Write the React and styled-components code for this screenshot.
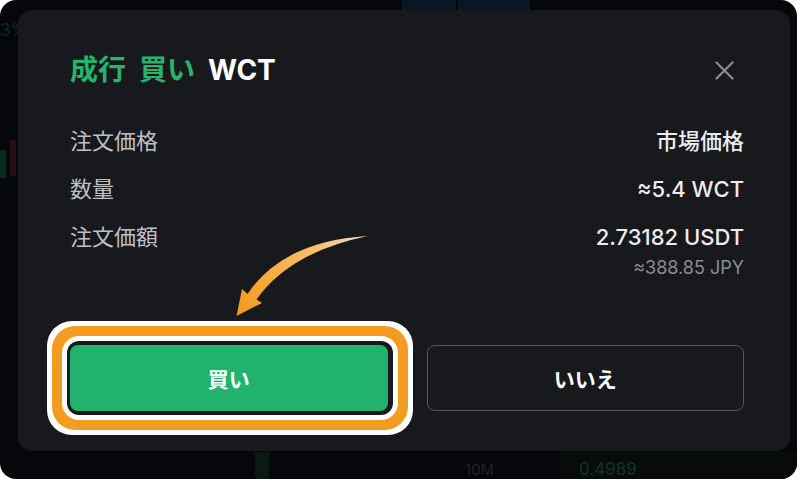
import React from "react";
import styled, { createGlobalStyle } from "styled-components";

const GlobalStyle = createGlobalStyle`
  html, body {
    margin: 0;
    padding: 0;
    background: #ffffff;
  }
  body {
    width: 800px;
    height: 482px;
    overflow: hidden;
    font-family: Inter, "Noto Sans CJK JP", sans-serif;
  }
`;

const Frame = styled.div`
  position: relative;
  width: 797px;
  height: 479px;
  box-sizing: border-box;
  padding: 10px 7px 0 18px;
  background: #06070a;
  border-radius: 16px;
  overflow: hidden;
`;

const Backdrop = styled.div`
  position: absolute;
  inset: 0;
  z-index: 0;
`;

const Faint = styled.span`
  position: absolute;
  left: ${(p) => p.$x}px;
  top: ${(p) => p.$y}px;
  font-size: ${(p) => p.$size || 16}px;
  color: ${(p) => p.$color};
  line-height: 1;
  white-space: nowrap;
`;

const FaintBlock = styled.div`
  position: absolute;
  left: ${(p) => p.$x}px;
  top: ${(p) => p.$y}px;
  width: ${(p) => p.$w}px;
  height: ${(p) => p.$h}px;
  background: ${(p) => p.$color};
`;

const Modal = styled.div`
  position: relative;
  z-index: 1;
  width: 772px;
  box-sizing: border-box;
  padding: 42px 46px 40px 52px;
  background: #18191d;
  border-radius: 14px;
`;

const Header = styled.div`
  display: flex;
  align-items: center;
  justify-content: space-between;
  height: 36px;
`;

const Title = styled.h2`
  margin: 0;
  font-size: 28px;
  line-height: 36px;
  font-weight: 700;
  color: #ffffff;
  display: flex;
  gap: 13px;
`;

const Green = styled.span`
  color: #26b46c;
`;

const CloseButton = styled.button`
  width: 40px;
  height: 40px;
  padding: 0;
  border: none;
  background: transparent;
  display: flex;
  align-items: center;
  justify-content: center;
  cursor: pointer;
`;

const InfoList = styled.div`
  display: flex;
  flex-direction: column;
  gap: 18px;
  margin-top: 38px;
`;

const Row = styled.div`
  display: flex;
  justify-content: space-between;
  align-items: flex-start;
`;

const Label = styled.span`
  font-size: 22px;
  line-height: 30px;
  color: #bfc0c4;
`;

const ValueCol = styled.div`
  display: flex;
  flex-direction: column;
  align-items: flex-end;
`;

const Value = styled.span`
  font-size: 22px;
  line-height: 30px;
  font-weight: 500;
  color: #ececee;
`;

const SubValue = styled.span`
  margin-top: 4px;
  font-size: 18px;
  line-height: 24px;
  color: #8b8c91;
`;

const Actions = styled.div`
  display: grid;
  grid-template-columns: 1fr 1fr;
  gap: 39px;
  margin-top: 65px;
`;

const ActionButton = styled.button`
  height: 66px;
  border-radius: 8px;
  font-family: Inter, "Noto Sans CJK JP", sans-serif;
  font-size: 21px;
  font-weight: 700;
  color: #ffffff;
  cursor: pointer;
  background: ${(p) => (p.$primary ? "#21b36d" : "transparent")};
  border: ${(p) => (p.$primary ? "none" : "1.5px solid #55565b")};
  box-shadow: ${(p) =>
    p.$highlight
      ? "1px 0 0 4px #18191d, 1px 0 0 9px #ffffff, 1px 0 0 19px #f39c1f, 1px 0 0 24px #ffffff"
      : "none"};
`;

const Overlay = styled.svg`
  position: absolute;
  left: 0;
  top: 0;
  z-index: 2;
  pointer-events: none;
`;

const CloseIcon = () => (
  <svg width="19" height="19" viewBox="0 0 19 19">
    <path d="M1.5 1.5 L17.5 17.5 M17.5 1.5 L1.5 17.5" stroke="#8d8e92" strokeWidth="2.2" strokeLinecap="round" />
  </svg>
);

const rows = [
  { label: "注文価格", value: "市場価格" },
  { label: "数量", value: "≈5.4 WCT" },
  { label: "注文価額", value: "2.73182 USDT", sub: "≈388.85 JPY" },
];

export default function App() {
  return (
    <>
      <GlobalStyle />
      <Frame>
        <Backdrop>
          <Faint $x={0} $y={22} $size={17} $color="#0d2a1d">3%</Faint>
          <FaintBlock $x={402} $y={0} $w={54} $h={10} $color="#0a1626" />
          <FaintBlock $x={458} $y={0} $w={72} $h={10} $color="#0a1626" />
          <FaintBlock $x={0} $y={150} $w={6} $h={28} $color="#0c2a1c" />
          <FaintBlock $x={10} $y={140} $w={6} $h={36} $color="#2a0d12" />
          <FaintBlock $x={255} $y={452} $w={14} $h={30} $color="#0a1a12" />
          <FaintBlock $x={560} $y={452} $w={240} $h={30} $color="#070c0a" />
          <Faint $x={465} $y={462} $size={15} $color="#202226">10M</Faint>
          <Faint $x={579} $y={461} $size={17} $color="#0f3523">0.4989</Faint>
        </Backdrop>
        <Modal>
          <Header>
            <Title>
              <Green>成行</Green>
              <Green>買い</Green>
              <span>WCT</span>
            </Title>
            <CloseButton aria-label="close">
              <CloseIcon />
            </CloseButton>
          </Header>
          <InfoList>
            {rows.map((r) => (
              <Row key={r.label}>
                <Label>{r.label}</Label>
                <ValueCol>
                  <Value>{r.value}</Value>
                  {r.sub && <SubValue>{r.sub}</SubValue>}
                </ValueCol>
              </Row>
            ))}
          </InfoList>
          <Actions>
            <ActionButton $primary $highlight>買い</ActionButton>
            <ActionButton>いいえ</ActionButton>
          </Actions>
        </Modal>
        <Overlay width="800" height="482" viewBox="0 0 800 482">
          <defs>
            <linearGradient id="arrowGrad" gradientUnits="userSpaceOnUse" x1="368" y1="236" x2="240" y2="312">
              <stop offset="0" stopColor="#fff1dc" stopOpacity="0.9" />
              <stop offset="0.35" stopColor="#f9c06a" />
              <stop offset="1" stopColor="#f29a1e" />
            </linearGradient>
          </defs>
          <path
            d="M368 236 Q283 241 247.5 294 L242 289 L236.5 316 L262 303 L256.5 299.5 Q290 252 368 236 Z"
            fill="url(#arrowGrad)"
          />
        </Overlay>
      </Frame>
    </>
  );
}
